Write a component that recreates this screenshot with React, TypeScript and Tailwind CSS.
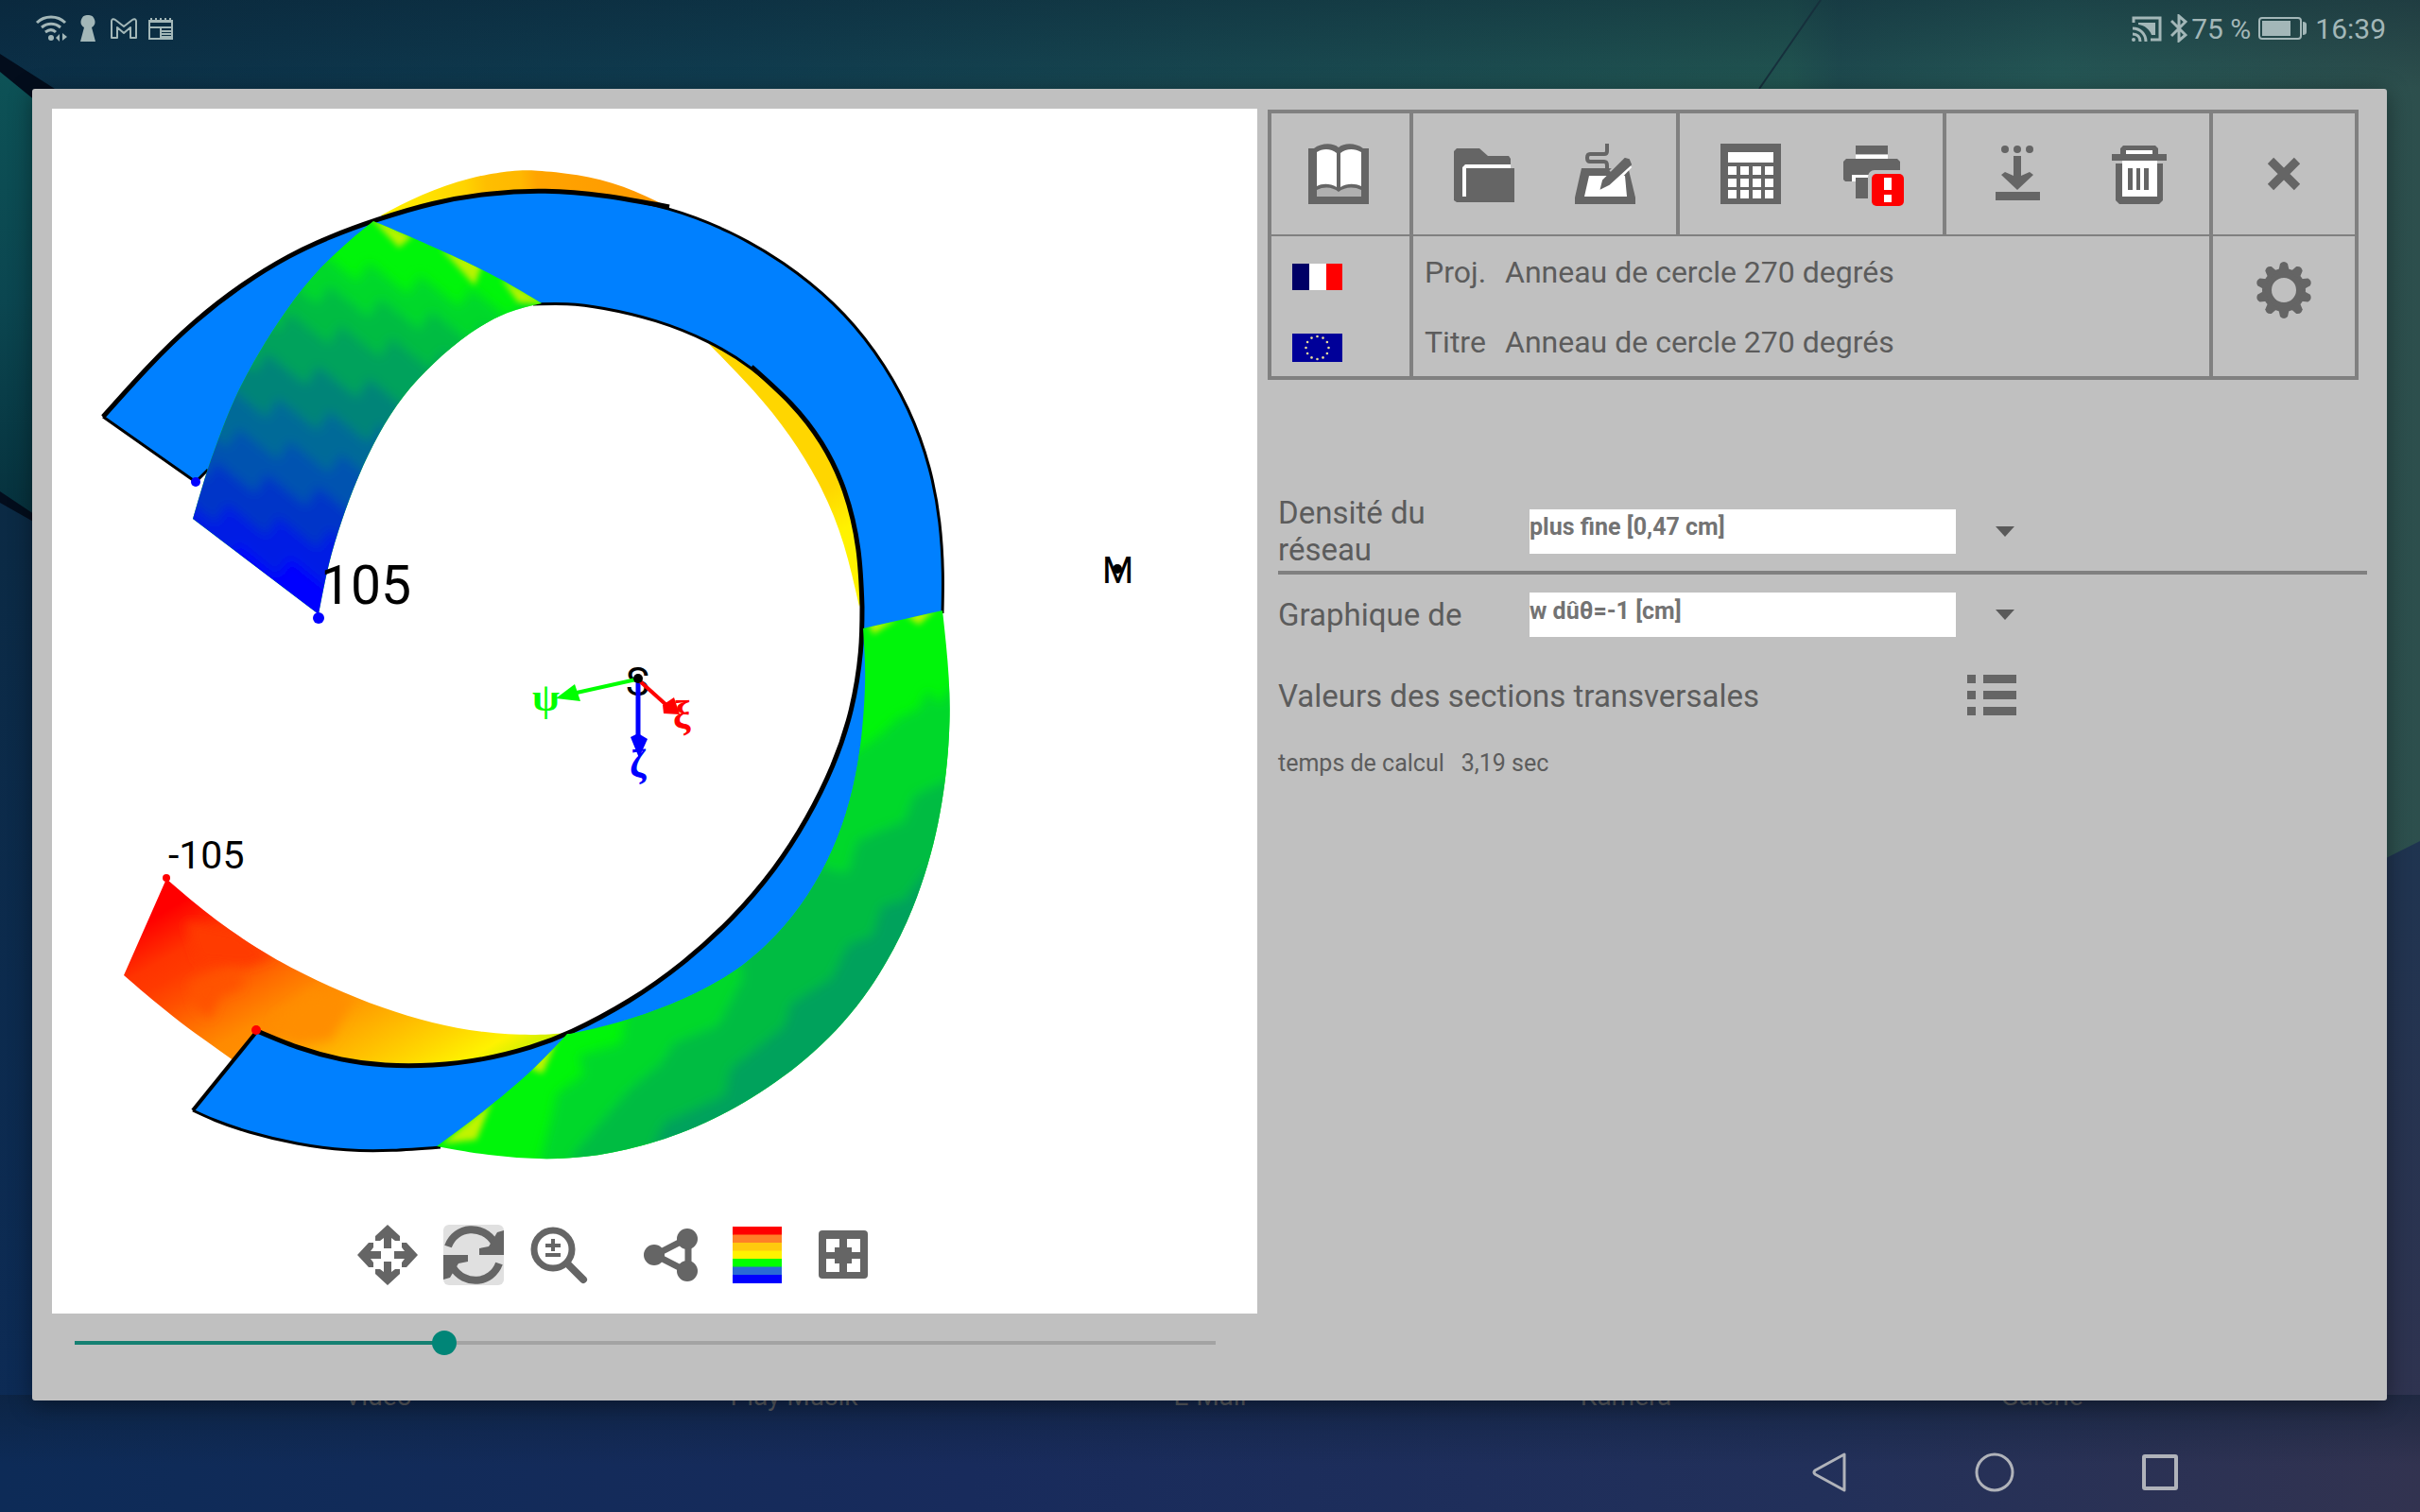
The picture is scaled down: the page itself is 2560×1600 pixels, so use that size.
import React, { useState } from 'react';

type Point = [number, number];

/** Cubic B-spline along the given points, clamped at both ends. */
const curve = (pts: Point[]): string =>
  pts
    .slice(0, -1)
    .map((p, i) => {
      const b = pts[i + 1];
      const c = pts[i + 2];
      const mix = (k: 0 | 1, t: number) => p[k] + (b[k] - p[k]) * t;
      const end = (k: 0 | 1) => (c ? (p[k] + 4 * b[k] + c[k]) / 6 : b[k]);
      return `C${mix(0, 1 / 3)} ${mix(1, 1 / 3)} ${mix(0, 2 / 3)} ${mix(1, 2 / 3)} ${end(0)} ${end(1)}`;
    })
    .join(' ');

const open = (pts: Point[]) => `M${pts[0].join(' ')} ${curve(pts)}`;

/** Joins several smooth edges into one closed outline. */
const outline = (...edges: Point[][]) =>
  edges.map((e, i) => `${i ? 'L' : 'M'}${e[0].join(' ')} ${curve(e)}`).join(' ') + 'Z';

// Undeformed ring
const OUTER: Point[] = [
  [109, 441], [157, 387], [205, 340], [257, 300], [306, 270], [350, 250], [396, 233], [458, 214], [518, 204], [576, 201],
  [638, 206], [708, 219], [774, 245], [829, 277], [883, 320], [926, 370], [963, 433], [985, 496], [995, 553], [998, 608], [997, 649],
];
const INNER_TOP: Point[] = [
  [564, 322], [600, 321], [635, 325], [694, 338], [751, 361], [795, 388], [839, 427], [870, 467], [895, 517], [910, 582], [912, 642],
];
const INNER_BOTTOM: Point[] = [
  [912, 642], [912, 687], [902, 752], [882, 811], [854, 867], [821, 919], [774, 974], [724, 1019], [667, 1060], [600, 1095],
  [564, 1108], [511, 1122], [457, 1128], [407, 1128], [361, 1122], [314, 1109], [272, 1091],
];
const END_BOTTOM: Point[] = [[204, 1175], [225, 1185], [261, 1198], [314, 1211], [368, 1218], [414, 1218], [466, 1214]];

// Deformed ring
const TOP_LEFT: Point[] = [[395, 234], [372, 252], [329, 292], [293, 342], [268, 383], [247, 423], [230, 467], [216, 507], [204, 549]];
const TOP_RIGHT: Point[] = [[337, 650], [347, 597], [361, 551], [379, 503], [400, 459], [426, 418], [458, 384], [497, 351], [537, 329], [573, 321]];
const TOP_EDGE: Point[] = [[573, 321], [544, 303], [494, 277], [426, 247], [395, 234]];
const LOW_OUTER: Point[] = [
  [462, 1213], [493, 1219], [546, 1226], [603, 1227], [662, 1218], [728, 1198], [795, 1164], [862, 1116], [922, 1050], [969, 961],
  [995, 870], [1005, 785], [1005, 718], [997, 646],
];
const LOW_INNER: Point[] = [
  [913, 665], [916, 711], [914, 752], [909, 805], [896, 862], [876, 912], [848, 959], [812, 1001], [768, 1036], [710, 1064], [653, 1083], [603, 1094],
];
const LOW_EDGE: Point[] = [[600, 1094], [564, 1133], [511, 1177], [462, 1213]];
const RED_TOP: Point[] = [[176, 930], [227, 974], [289, 1015], [350, 1045], [405, 1067], [457, 1083], [511, 1093], [564, 1096], [600, 1093]];
const RED_BOTTOM: Point[] = [[251, 1125], [214, 1099], [182, 1075], [154, 1052], [131, 1032]];
const CREST: Point[] = [[403, 228], [444, 206], [498, 187], [544, 180], [565, 180], [610, 184], [660, 196], [707, 219]];
const INNER_CREST: Point[] = [[750, 364], [799, 414], [836, 460], [871, 517], [894, 575], [909, 642]];

// Contour bands of the upper arm: [distance along the arm, colour]
const BANDS: [number, string][] = [
  [192, '#00d82a'], [227, '#00bc42'], [266, '#00a25c'], [315, '#008478'], [360, '#006a98'],
  [402, '#0052b0'], [443, '#0034c8'], [485, '#001ce4'], [525, '#0000ff'],
];

const bandPath = (level: number, shift: number): string => {
  const pts: string[] = [];
  for (let x = 120; x < 640; x += 54) {
    const left = x + shift;
    pts.push(`${left} ${level + left * 0.25 - 12}`, `${left + 42} ${level + left * 0.25 + 22}`);
  }
  return `M100 760 L${pts.join(' L')} L700 760Z`;
};

const Plot: React.FC = () => (
  <svg viewBox="55 115 1275 1181" className="block w-full" role="img" aria-label="w dûθ=-1 [cm]">
    <defs>
      <filter id="soft" x="-10%" y="-10%" width="120%" height="120%">
        <feGaussianBlur stdDeviation="6" />
      </filter>
      <filter id="spot" x="-50%" y="-50%" width="200%" height="200%">
        <feGaussianBlur stdDeviation="3" />
      </filter>
      <clipPath id="upperArm">
        <path d={outline(TOP_LEFT, TOP_RIGHT, TOP_EDGE)} />
      </clipPath>
      <clipPath id="lowerArm">
        <path d={outline(LOW_OUTER, LOW_INNER, LOW_EDGE)} />
      </clipPath>
      <clipPath id="redArm">
        <path d={outline(RED_TOP, INNER_BOTTOM.slice(9), RED_BOTTOM)} />
      </clipPath>
      <linearGradient id="warm" gradientUnits="userSpaceOnUse" x1="160" y1="953" x2="329" y2="1244">
        <stop offset="0.05" stopColor="#ff0000" />
        <stop offset="0.18" stopColor="#ff3400" />
        <stop offset="0.24" stopColor="#ff3a00" />
        <stop offset="0.32" stopColor="#ff5000" />
        <stop offset="0.4" stopColor="#ff6c00" />
        <stop offset="0.5" stopColor="#ff8a00" />
        <stop offset="0.56" stopColor="#ff8e00" />
        <stop offset="0.64" stopColor="#ffa500" />
        <stop offset="0.74" stopColor="#ffbe00" />
        <stop offset="0.84" stopColor="#ffd800" />
        <stop offset="0.93" stopColor="#fff200" />
        <stop offset="1" stopColor="#d0f000" />
      </linearGradient>
      <linearGradient id="crest" gradientUnits="userSpaceOnUse" x1="403" y1="220" x2="700" y2="200">
        <stop offset="0" stopColor="#fff200" />
        <stop offset="0.3" stopColor="#ffd400" />
        <stop offset="0.38" stopColor="#ffbe00" />
        <stop offset="0.5" stopColor="#ffb800" />
        <stop offset="0.56" stopColor="#ffa400" />
        <stop offset="1" stopColor="#ff9800" />
      </linearGradient>
      <linearGradient id="innerCrest" gradientUnits="userSpaceOnUse" x1="760" y1="370" x2="905" y2="640">
        <stop offset="0.6" stopColor="#ffd600" />
        <stop offset="0.75" stopColor="#fff200" />
      </linearGradient>
    </defs>

    <g clipPath="url(#redArm)">
      <rect x="120" y="900" width="500" height="260" fill="url(#warm)" />
      <g filter="url(#soft)">
        <path d="M196 975 L250 985 L290 1012 L262 1022 L210 1018Z" fill="#ff3a00" />
        <path d="M200 1040 L250 1024 L256 1044 L232 1052 L222 1078 L208 1066Z" fill="#ff5200" />
        <path d="M290 1080 L330 1050 L372 1058 L350 1100 L310 1104Z" fill="#ff8e00" />
      </g>
    </g>
    <path d={`${open(CREST)} L700 240 L560 215 L420 240Z`} fill="url(#crest)" />
    <path d={`${open(INNER_CREST)} L920 600 L880 450 L790 370Z`} fill="url(#innerCrest)" />

    {/* flat ring */}
    <path
      d={`${open(OUTER)} L1000 800 L920 1000 L640 1110 L590 1140 L466 1214 ${curve([...END_BOTTOM].reverse())} L272 1091 ${curve([...INNER_BOTTOM].reverse())} L912 642 ${curve([...INNER_TOP].reverse())} L400 360 L217 499 L207 510Z`}
      fill="#0080ff"
    />
    <g fill="none" stroke="#000" strokeLinejoin="round">
      <path d={open(OUTER)} strokeWidth="3" />
      <path d={open(OUTER.slice(0, 12))} strokeWidth="5" />
      <path d="M109 441 L207 510 L220 497" strokeWidth="3" />
      <path d={open(INNER_TOP)} strokeWidth="3" />
      <path d={open(INNER_TOP.slice(5))} strokeWidth="5" />
      <path d={open(INNER_BOTTOM)} strokeWidth="5" />
      <path d="M272 1091 L204 1175" strokeWidth="4" />
      <path d={open(END_BOTTOM)} strokeWidth="3" />
    </g>

    {/* deformed ring, upper arm */}
    <g clipPath="url(#upperArm)">
      <rect x="180" y="200" width="420" height="480" fill="#00f50a" />
      <g filter="url(#soft)">
        {BANDS.map(([level, color], i) => (
          <path key={color} d={bandPath(level, (i % 3) * 12)} fill={color} />
        ))}
      </g>
      <g fill="#b8f400" filter="url(#spot)">
        <path d="M390 228 L436 250 L422 262Z" />
        <path d="M466 262 L510 280 L502 302Z" />
        <path d="M530 294 L580 322 L548 320Z" />
      </g>
    </g>

    {/* deformed ring, lower arm */}
    <g clipPath="url(#lowerArm)">
      <rect x="440" y="620" width="600" height="640" fill="#00f50a" />
      <g filter="url(#soft)">
        <path
          d="M905 795 L932 777 L950 760 L972 750 L981 730 L994 745 L1006 727 L1040 727 V1280 H560 L575 1215 L584 1180 L589 1157 L618 1137 L612 1117 L657 1104 L662 1075 L700 900Z"
          fill="#00d82a"
        />
        <path
          d="M865 915 L880 921 L897 924 L907 890 L930 880 L957 869 L967 842 L997 828 L1040 815 V1280 H590 L607 1221 L637 1186 L667 1152 L700 1125 L713 1104 L760 1085 L786 1035 L780 1000Z"
          fill="#00bc42"
        />
        <path
          d="M980 922 L957 952 L933 959 L923 990 L897 1000 L880 1035 L837 1062 L830 1086 L773 1131 L767 1159 L703 1188 L690 1215 L720 1280 H1040 V900Z"
          fill="#00a25c"
        />
      </g>
      <g fill="#c0f400" filter="url(#spot)">
        <path d="M590 1098 L560 1130 L574 1136Z" />
        <path d="M520 1166 L468 1210 L504 1206Z" />
        <path d="M918 660 L950 654 L924 671Z" />
        <path d="M958 651 L990 644 L972 661Z" />
      </g>
    </g>

    <g fill="#0000ff">
      <circle cx="207" cy="510" r="5" />
      <circle cx="337" cy="654" r="6" />
    </g>
    <g fill="#ff0000">
      <circle cx="176" cy="929" r="4" />
      <circle cx="271" cy="1090" r="5" />
    </g>

    {/* local axes */}
    <text x="662" y="736" fontSize="42" fontFamily="Roboto, sans-serif">S</text>
    <path d="M673 719 L610 733" stroke="#00ff00" strokeWidth="4" />
    <path d="M588 739 L608 724 L614 742Z" fill="#00ff00" />
    <path d="M675 720 V785" stroke="#0000ff" strokeWidth="5" />
    <path d="M667 780 L675 776 L685 782 L676 802Z" fill="#0000ff" />
    <path d="M676 720 L706 747" stroke="#ff0000" strokeWidth="4" />
    <path d="M701 746 L713 738 L719 756 L702 755Z" fill="#ff0000" />
    <circle cx="675" cy="718" r="5" />
    <g fontSize="42" fontWeight="bold" fontFamily='"Liberation Serif", serif'>
      <text x="563" y="752" fill="#00ff00">ψ</text>
      <text x="712" y="771" fill="#ff0000">ξ</text>
      <text x="666" y="822" fill="#0000ff">ζ</text>
    </g>
    <g fontFamily="Roboto, sans-serif">
      <text x="1166" y="617" fontSize="38">M</text>
      <circle cx="1182" cy="602" r="5" />
      <text x="339" y="639" fontSize="57">105</text>
      <text x="178" y="919" fontSize="41">-105</text>
    </g>
  </svg>
);

const Icon: React.FC<{ children: React.ReactNode }> = ({ children }) => (
  <svg viewBox="0 0 64 64" className="block size-16 overflow-visible" fill="#656565" aria-hidden="true">
    {children}
  </svg>
);

const BookIcon = () => (
  <Icon>
    <path d="M0 5 H6 C14 -1 26 -1 32 4 C38 -1 50 -1 58 5 H64 V64 H0Z" />
    <path d="M9 9 C15 5 24 5 30 10 V46 C23 42 15 42 9 45Z M34 10 C40 5 49 5 56 9 V45 C49 42 41 42 34 46Z" fill="#fff" />
    <path d="M9 49 C17 45 26 46 32 51 C38 46 48 45 56 49 V56 H9Z" fill="#b0b0b0" />
  </Icon>
);

const FolderIcon = () => (
  <Icon>
    <path d="M0 8 L3 5 H27 L36 13 H58 L60 16 V62 H3 L0 60Z" />
    <path d="M9 25 L12 22 H60 V27 H13 V56 H9Z" fill="#fff" />
    <path d="M13 26 H64 V62 H13Z" />
  </Icon>
);

const WriteIcon = () => (
  <Icon>
    <path d="M7 26 H36 L57 28 L64 57 V64 H0 V57Z" />
    <path d="M15 34 H53 L55 56 H10Z" fill="#fff" />
    <path d="M57 22 L35 45" stroke="#fff" strokeWidth="9" />
    <path d="M57 15 L40 32" stroke="#c0c0c0" strokeWidth="10" />
    <path d="M53 16 L57 17 L59 22 L36 43 L28 47 L30 39Z" stroke="#656565" strokeWidth="2" />
    <path d="M34 0 V8 Q34 11 31 11 H16 Q13 11 13 15 Q13 19 16 19 H31 Q34 19 34 23 V28" fill="none" stroke="#656565" strokeWidth="4" />
  </Icon>
);

const CalculatorIcon = () => (
  <Icon>
    <path d="M0 0 H64 V64 H0Z" />
    <g fill="#fff">
      <path d="M8 9 H56 V20 H8Z" />
      {[24, 37, 49].map((y) => [8, 21, 34, 47].map((x) => <rect key={`${x}-${y}`} x={x} y={y} width="9" height="9" />))}
    </g>
  </Icon>
);

const PrinterIcon = () => (
  <Icon>
    <path d="M15 2 H49 V11 H15Z" />
    <path d="M15 12 H49 V16 H15Z" fill="#fff" />
    <path d="M2 19 L5 16 H59 L62 19 V38 L60 40 H4 L2 38Z" />
    <path d="M11 33 H32 V40 H11Z" fill="#fff" />
    <path d="M15 36 H40 V58 H15Z" />
    <rect x="28" y="28" width="42" height="42" rx="7" fill="#c0c0c0" />
    <rect x="32" y="32" width="34" height="34" rx="5" fill="#ff0000" />
    <path d="M45 36 H53 V49 H45Z M45 54 H53 V62 H45Z" fill="#fff" />
  </Icon>
);

const DownloadIcon = () => (
  <Icon>
    <circle cx="19" cy="6" r="4" />
    <circle cx="32" cy="6" r="4" />
    <circle cx="45" cy="6" r="4" />
    <path d="M28 13 H36 V34 L45 30 L49 33 L32 49 L15 33 L19 30 L28 34Z" />
    <path d="M9 51 H56 V60 H9Z" />
  </Icon>
);

const TrashIcon = () => (
  <Icon>
    <path d="M13 11 V5 L16 2 H50 L53 5 V11 H62 V18 H4 V11Z M8 21 H58 V60 L54 64 H12 L8 60Z" />
    <path d="M19 7 H47 V11 H19Z M15 18 H52 V56 H15Z" fill="#fff" />
    <path d="M21 26 H26 V49 H21Z M30 26 H34 V49 H30Z M38 26 H43 V49 H38Z" />
  </Icon>
);

const CloseIcon = () => (
  <Icon>
    <path d="M18 18 L46 46 M46 18 L18 46" stroke="#656565" strokeWidth="9" />
  </Icon>
);

const GearIcon = () => (
  <Icon>
    <circle cx="32" cy="32" r="18" fill="none" stroke="#656565" strokeWidth="10" />
    {Array.from({ length: 10 }, (_, i) => (
      <path key={i} d="M26 13 L28 4 Q32 0 36 4 L38 13Z" transform={`rotate(${i * 36} 32 32)`} />
    ))}
  </Icon>
);

const MoveIcon = () => (
  <Icon>
    {[0, 90, 180, 270].map((angle) => (
      <path key={angle} d="M32 0 L45 12 V17 H40 L36 14 V25 H28 V14 L24 17 H19 V12Z" transform={`rotate(${angle} 32 32)`} />
    ))}
  </Icon>
);

const RotateIcon = () => (
  <Icon>
    <rect width="64" height="64" rx="6" fill="#e0e0e0" />
    {[0, 180].map((angle) => (
      <g key={angle} transform={`rotate(${angle} 32 32)`}>
        <path d="M5 23 C13 1 42 -1 54 19" fill="none" stroke="#656565" strokeWidth="8" />
        <path d="M64 6 V32 H38 V25 L48 23 L57 8Z" />
      </g>
    ))}
  </Icon>
);

const ZoomIcon = () => (
  <Icon>
    <circle cx="25" cy="26" r="20" fill="none" stroke="#656565" strokeWidth="7" />
    <path d="M41 42 L57 58" stroke="#656565" strokeWidth="8" strokeLinecap="round" />
    <path d="M17 22 H33 M25 15 V28 M17 32 H33" stroke="#656565" strokeWidth="4" />
  </Icon>
);

const NodesIcon = () => (
  <Icon>
    <path d="M15 32 L50 14 V50Z" fill="none" stroke="#656565" strokeWidth="7" />
    <circle cx="14" cy="32" r="11" />
    <circle cx="49" cy="15" r="11" />
    <circle cx="49" cy="49" r="11" />
  </Icon>
);

const RAINBOW = ['#ff0000', '#ff7f27', '#ffc90e', '#fff200', '#00ff00', '#2a6ad6', '#0000ff'];

const ColorsIcon = () => (
  <Icon>
    {RAINBOW.map((color, i) => (
      <rect key={color} x="6" y={2 + i * 8.5} width="52" height="9" fill={color} />
    ))}
  </Icon>
);

const FitIcon = () => (
  <Icon>
    <rect x="6" y="6" width="52" height="51" rx="4" />
    <path
      d="M14 15 H28 V24 H23 V29 H14Z M36 15 H50 V29 H41 V24 H36Z M14 36 H23 V41 H28 V50 H14Z M41 36 H50 V50 H36 V41 H41Z"
      fill="#fff"
    />
  </Icon>
);

const Tool: React.FC<{ label: string; children: React.ReactNode }> = ({ label, children }) => (
  <button type="button" aria-label={label}>
    {children}
  </button>
);

const StatusBar: React.FC = () => (
  <header className="flex h-[60px] items-center justify-between pl-[37px] pr-9 text-[30px] text-[#a3b7b8]">
    <div className="flex items-center gap-[14px]">
      <svg viewBox="0 0 34 28" className="h-7 w-[34px]" fill="none" stroke="currentColor" strokeWidth="3">
        <path d="M2 8 C10 0 24 0 32 8 M7 13 C13 8 21 8 27 13 M11 18 C15 15 19 15 22 18" />
        <circle cx="17" cy="24" r="3" fill="currentColor" stroke="none" />
        <path d="M22 24 L26 20 V28Z M34 23 L29 19 V27Z" fill="currentColor" stroke="none" />
      </svg>
      <svg viewBox="0 0 16 28" className="h-7 w-4" fill="currentColor">
        <path d="M8 0 A7 7 0 0 1 12 13 L16 28 H0 L4 13 A7 7 0 0 1 8 0Z" />
      </svg>
      <svg viewBox="0 0 28 22" className="ml-0.5 h-[22px] w-7" fill="none" stroke="currentColor" strokeWidth="2" strokeLinejoin="round">
        <path d="M1 21 V3 Q2 0 5 2 L14 9 L23 2 Q26 0 27 3 V21 H21 V10 L14 16 L7 10 V21Z" />
      </svg>
      <svg viewBox="0 0 26 24" className="-ml-0.5 h-6 w-[26px]" fill="none" stroke="currentColor" strokeWidth="2">
        <path d="M1 3 V23 H25 V3 M1 4 H25" />
        <path d="M1 5 H25 M3 1 V4 M8 1 V4 M13 1 V4 M18 1 V4 M23 1 V4 M1 11 H25 M13 11 V23 M13 15 H25 M13 18 H25 M13 21 H25" />
      </svg>
    </div>
    <div className="flex items-center">
      <svg viewBox="0 0 32 27" className="mr-[9px] h-[27px] w-8" fill="none" stroke="currentColor" strokeWidth="3">
        <path d="M2 7 V2 H30 V25 H20" />
        <path d="M7 7 H25 V20 H21 C19 14 14 10 7 9Z" fill="currentColor" stroke="none" />
        <path d="M1 13 C9 13 15 19 15 27 M1 19 C6 19 9 22 9 27" />
        <circle cx="2" cy="25" r="2" fill="currentColor" stroke="none" />
      </svg>
      <svg viewBox="0 0 18 30" className="mr-1 h-[30px] w-[18px]" fill="none" stroke="currentColor" strokeWidth="3">
        <path d="M1 7 L16 22 L9 28 V2 L16 8 L1 23" />
      </svg>
      <span>75 %</span>
      <svg viewBox="0 0 52 24" className="mx-2 h-6 w-[52px]">
        <rect x="1" y="1" width="44" height="22" rx="3" fill="none" stroke="currentColor" strokeWidth="2" />
        <path d="M4 4 H34 V20 H4Z M47 5 Q51 5 51 8 V16 Q51 19 47 19Z" fill="currentColor" />
      </svg>
      <span>16:39</span>
    </div>
  </header>
);

const Toolbar: React.FC = () => (
  <div className="mr-[9px] mt-px grid grid-cols-[146fr_278fr_278fr_278fr_150fr] grid-rows-[128px_148px] gap-x-1 gap-y-[2px] border-4 border-[#808080] bg-[#808080] *:bg-[#c0c0c0]">
    <div className="flex items-center justify-center pr-1">
      <Tool label="Manuel"><BookIcon /></Tool>
    </div>
    <div className="flex items-center justify-center gap-16">
      <Tool label="Ouvrir"><FolderIcon /></Tool>
      <Tool label="Modifier"><WriteIcon /></Tool>
    </div>
    <div className="flex items-center justify-center gap-16">
      <Tool label="Calculer"><CalculatorIcon /></Tool>
      <Tool label="Imprimer"><PrinterIcon /></Tool>
    </div>
    <div className="flex items-center justify-center gap-16">
      <Tool label="Enregistrer"><DownloadIcon /></Tool>
      <Tool label="Supprimer"><TrashIcon /></Tool>
    </div>
    <div className="flex items-center justify-center">
      <Tool label="Fermer"><CloseIcon /></Tool>
    </div>
    <div className="flex flex-col items-start gap-[46px] pl-[22px] pt-[29px]">
      <button type="button" aria-label="Français">
        <svg viewBox="0 0 53 28" className="block h-7 w-[53px]">
          <path d="M0 0 H18 V28 H0Z" fill="#000066" />
          <path d="M18 0 H36 V28 H18Z" fill="#fff" />
          <path d="M36 0 H53 V28 H36Z" fill="#ff0000" />
        </svg>
      </button>
      <button type="button" aria-label="Europe">
        <svg viewBox="0 0 53 30" className="block h-[30px] w-[53px]">
          <path d="M0 0 H53 V30 H0Z" fill="#000099" />
          {Array.from({ length: 12 }, (_, i) => (
            <circle
              key={i}
              cx={26.5 + 12 * Math.sin((i * Math.PI) / 6)}
              cy={15 - 12 * Math.cos((i * Math.PI) / 6)}
              r="1.3"
              fill="#e8dc9a"
            />
          ))}
        </svg>
      </button>
    </div>
    <dl className="col-span-3 grid grid-cols-[85px_1fr] content-start gap-y-9 pl-3 pt-[19px] text-[32px] leading-[38px]">
      <dt>Proj.</dt>
      <dd>Anneau de cercle 270 degrés</dd>
      <dt>Titre</dt>
      <dd>Anneau de cercle 270 degrés</dd>
    </dl>
    <div className="flex items-start justify-center pt-[25px]">
      <Tool label="Paramètres"><GearIcon /></Tool>
    </div>
  </div>
);

interface PickerProps {
  id: string;
  label: string;
  value: string;
}

const Picker: React.FC<PickerProps> = ({ id, label, value }) => (
  <div className="flex items-center">
    <div className="w-[266px]">
      <label htmlFor={id} className="block w-52 text-[33px] leading-[39px]">{label}</label>
    </div>
    <select id={id} className="h-[47px] w-[451px] appearance-none rounded-none bg-white pb-2 text-[25px] font-bold text-[#737373] outline-none">
      <option>{value}</option>
    </select>
    <svg viewBox="0 0 20 11" className="ml-[42px] h-[11px] w-5" fill="#5a5a5a" aria-hidden="true">
      <path d="M0 0 H20 L10 11Z" />
    </svg>
  </div>
);

const Settings: React.FC = () => (
  <section className="mt-[121px] pl-[11px]">
    <div className="border-b-4 border-[#808080] pb-[3px]">
      <Picker id="density" label="Densité du réseau" value="plus fine [0,47 cm]" />
    </div>
    <div className="mt-[19px]">
      <Picker id="graph" label="Graphique de" value="w dûθ=-1 [cm]" />
    </div>
    <div className="mt-10 flex items-center">
      <p className="w-[729px] text-[33px] leading-[39px]">Valeurs des sections transversales</p>
      <button type="button" aria-label="Liste des valeurs">
        <svg viewBox="0 0 52 44" className="block h-11 w-[52px]" fill="#656565">
          <path d="M0 0 H9 V9 H0Z M17 0 H52 V9 H17Z M0 17 H9 V26 H0Z M17 17 H52 V26 H17Z M0 34 H9 V43 H0Z M17 34 H52 V43 H17Z" />
        </svg>
      </button>
    </div>
    <p className="mt-[34px] flex gap-[18px] text-[25px] leading-8">
      <span>temps de calcul</span>
      <span>3,19 sec</span>
    </p>
  </section>
);

const Wallpaper: React.FC = () => (
  <svg viewBox="0 0 2560 1600" preserveAspectRatio="none" className="absolute inset-0 -z-10 size-full" aria-hidden="true">
    <defs>
      <linearGradient id="sky" x1="0" y1="0" x2="1" y2="0">
        <stop offset="0" stopColor="#0b3048" />
        <stop offset="0.3" stopColor="#103d50" />
        <stop offset="0.74" stopColor="#225652" />
        <stop offset="0.76" stopColor="#1f4c50" />
        <stop offset="0.85" stopColor="#265957" />
        <stop offset="1" stopColor="#2d4f4d" />
      </linearGradient>
      <linearGradient id="dim" x1="0" y1="0" x2="0" y2="1">
        <stop offset="0" stopColor="#081c2c" stopOpacity="0.35" />
        <stop offset="1" stopColor="#081c2c" stopOpacity="0" />
      </linearGradient>
      <linearGradient id="ground" x1="0" y1="0" x2="1" y2="0">
        <stop offset="0" stopColor="#0d2b57" />
        <stop offset="0.4" stopColor="#182b5c" />
        <stop offset="0.75" stopColor="#22305a" />
        <stop offset="1" stopColor="#323350" />
      </linearGradient>
      <linearGradient id="leftEdge" x1="0" y1="0" x2="0" y2="1">
        <stop offset="0" stopColor="#0b2a44" />
        <stop offset="1" stopColor="#0d2b57" />
      </linearGradient>
      <linearGradient id="leftTeal" x1="0" y1="0" x2="0" y2="1">
        <stop offset="0" stopColor="#0d5256" />
        <stop offset="0.5" stopColor="#0b4650" />
        <stop offset="1" stopColor="#06303c" />
      </linearGradient>
      <linearGradient id="rightEdge" x1="0" y1="0" x2="0" y2="1">
        <stop offset="0" stopColor="#1f3450" />
        <stop offset="1" stopColor="#323350" />
      </linearGradient>
      <linearGradient id="shade" x1="0" y1="0" x2="0" y2="1">
        <stop offset="0" stopColor="#0c1e33" stopOpacity="0.5" />
        <stop offset="1" stopColor="#0c1e33" stopOpacity="0" />
      </linearGradient>
    </defs>
    <rect width="2560" height="1600" fill="url(#sky)" />
    <rect width="2560" height="94" fill="url(#dim)" />
    <path d="M1926 0 L1861 94" stroke="#16303c" strokeWidth="2" />
    <path d="M0 57 L58 94 V600 H0Z" fill="#030d1c" />
    <path d="M0 76 L60 125 V560 L0 520Z" fill="url(#leftTeal)" />
    <path d="M0 532 L60 566 V1600 H0Z" fill="url(#leftEdge)" />
    <path d="M2500 920 L2560 890 V1600 H2500Z" fill="url(#rightEdge)" />
    <path d="M0 1476 H2560 V1600 H0Z" fill="url(#ground)" />
    <path d="M0 1476 H2560 V1550 H0Z" fill="url(#shade)" />
  </svg>
);

/** Stress viewer dialog shown over the tablet's dimmed home screen. */
const App: React.FC = () => {
  // Position of the deformation scale slider, 0 to 1000.
  const [scale, setScale] = useState(324);

  return (
    <div className="relative isolate flex min-h-screen flex-col overflow-hidden font-[Roboto,sans-serif] text-[#5c5c5c]">
      <Wallpaper />
      <StatusBar />

      <main className="relative z-10 ml-[34px] mr-[35px] mt-[34px] grid grid-cols-[1275fr_1163fr] gap-[11px] rounded-[3px] bg-[#c0c0c0] px-[21px] pt-[21px] shadow-[0_4px_24px_rgba(0,0,0,0.4)]">
        <div>
          <div className="bg-white pb-[30px]">
            <Plot />
            <div className="flex gap-[54px] pl-[323px]">
              <div className="flex gap-[27px]">
                <Tool label="Déplacer"><MoveIcon /></Tool>
                <Tool label="Tourner"><RotateIcon /></Tool>
                <Tool label="Zoom"><ZoomIcon /></Tool>
              </div>
              <div className="flex gap-[27px]">
                <Tool label="Noeuds"><NodesIcon /></Tool>
                <Tool label="Couleurs"><ColorsIcon /></Tool>
                <Tool label="Ajuster"><FitIcon /></Tool>
              </div>
            </div>
          </div>
          <div className="flex pb-12 pl-[11px] pr-[31px] pt-[18px]">
            <input
              type="range"
              min="0"
              max="1000"
              value={scale}
              onChange={(e) => setScale(Number(e.target.value))}
              aria-label="Échelle"
              style={{ '--fill': `${scale / 10}%` } as React.CSSProperties}
              className="h-[26px] w-full appearance-none bg-transparent [&::-webkit-slider-runnable-track]:h-1 [&::-webkit-slider-runnable-track]:bg-[linear-gradient(to_right,#158072_var(--fill),#a3a3a3_var(--fill))] [&::-webkit-slider-runnable-track]:bg-[length:calc(100%-26px)_100%] [&::-webkit-slider-runnable-track]:bg-center [&::-webkit-slider-runnable-track]:bg-no-repeat [&::-webkit-slider-thumb]:-mt-[11px] [&::-webkit-slider-thumb]:size-[26px] [&::-webkit-slider-thumb]:appearance-none [&::-webkit-slider-thumb]:rounded-full [&::-webkit-slider-thumb]:bg-[#008577]"
            />
          </div>
        </div>
        <div>
          <Toolbar />
          <Settings />
        </div>
      </main>

      {/* Home screen captions, mostly covered by the dialog */}
      <div className="-mt-5 grid grid-cols-5 px-[180px] text-center text-[28px] leading-8 text-[#55595f]">
        <span>Video</span>
        <span>Play Musik</span>
        <span>E-Mail</span>
        <span>Kamera</span>
        <span>Galerie</span>
      </div>

      <nav className="mt-[34px] flex h-[60px] justify-end pr-[188px] text-[#b0b3ba]">
        <button type="button" aria-label="Retour" className="flex w-[175px] items-center justify-center">
          <svg viewBox="0 0 36 42" className="h-[42px] w-9" fill="none" stroke="currentColor" strokeWidth="3" strokeLinejoin="round">
            <path d="M34 2 V40 L3 23 Q1 21 3 19Z" />
          </svg>
        </button>
        <button type="button" aria-label="Accueil" className="flex w-[175px] items-center justify-center">
          <svg viewBox="0 0 42 42" className="size-[42px]" fill="none" stroke="currentColor" strokeWidth="3">
            <circle cx="21" cy="21" r="19" />
          </svg>
        </button>
        <button type="button" aria-label="Applications récentes" className="flex w-[175px] items-center justify-center">
          <svg viewBox="0 0 38 38" className="size-[38px]" fill="none" stroke="currentColor" strokeWidth="4">
            <rect x="2" y="2" width="34" height="34" rx="1" />
          </svg>
        </button>
      </nav>
    </div>
  );
};

export default App;
